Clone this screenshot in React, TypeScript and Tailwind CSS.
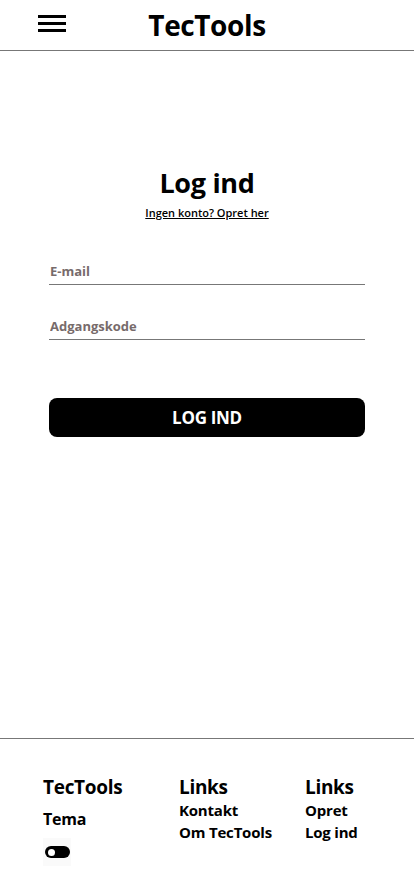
import { useState } from "react";

const font = { fontFamily: '"Open Sans", "Noto Sans", sans-serif' };

function Header() {
  return (
    <header className="relative h-[51px] border-b border-[#777] flex items-center justify-center">
      <button className="absolute left-[38px] top-[15px] flex flex-col gap-[4px]" aria-label="Menu">
        <span className="block w-[28px] h-[3px] bg-black" />
        <span className="block w-[28px] h-[3px] bg-black" />
        <span className="block w-[28px] h-[3px] bg-black" />
      </button>
      <h1 className="text-[28px] font-bold tracking-[-0.4px] text-black leading-none">TecTools</h1>
    </header>
  );
}

function LoginForm() {
  const [email, setEmail] = useState("");
  const [password, setPassword] = useState("");

  return (
    <main className="h-[687px] flex flex-col items-center pt-[118px]">
      <h2 className="text-[27px] font-bold leading-none tracking-[-0.3px]">Log ind</h2>
      <a href="#" className="mt-[11px] text-[11px] font-semibold underline text-black leading-none">
        Ingen konto? Opret her
      </a>
      <form className="w-[316px] mt-[40px] flex flex-col" onSubmit={(e) => e.preventDefault()}>
        <input
          type="email"
          value={email}
          onChange={(e) => setEmail(e.target.value)}
          placeholder="E-mail"
          className="h-[27px] px-[1px] border-b border-[#777] text-[13px] font-bold outline-none placeholder:text-[#776b6b]"
        />
        <input
          type="password"
          value={password}
          onChange={(e) => setPassword(e.target.value)}
          placeholder="Adgangskode"
          className="mt-[28px] h-[27px] px-[1px] border-b border-[#777] text-[13px] font-bold outline-none placeholder:text-[#776b6b]"
        />
        <button
          type="submit"
          className="mt-[58px] h-[39px] rounded-[8px] bg-black text-white text-[17px] font-bold tracking-[-0.3px]"
        >
          LOG IND
        </button>
      </form>
    </main>
  );
}

function Footer() {
  const [dark, setDark] = useState(false);
  return (
    <footer className="border-t border-[#777] pt-[36px] pl-[43px] pb-[30px] grid grid-cols-[136px_126px_1fr]">
      <div className="flex flex-col">
        <h3 className="text-[19px] font-bold leading-[24px] tracking-[-0.3px]">TecTools</h3>
        <p className="mt-[10px] text-[16px] font-bold leading-[20px] tracking-[-0.2px]">Tema</p>
        <button
          onClick={() => setDark(!dark)}
          className="mt-[9px] w-[28px] h-[28px] bg-[#fafafa] flex items-center justify-center"
          aria-label="Skift tema"
        >
          <span className="w-[25px] h-[12px] rounded-full bg-black flex items-center px-[3px]">
            <span className={`w-[7px] h-[7px] rounded-full bg-white ${dark ? "ml-auto" : ""}`} />
          </span>
        </button>
      </div>
      <div className="flex flex-col">
        <h3 className="text-[19px] font-bold leading-[24px] tracking-[-0.3px]">Links</h3>
        <a href="#" className="text-[15px] font-bold leading-[22px] tracking-[-0.2px]">Kontakt</a>
        <a href="#" className="text-[15px] font-bold leading-[22px] tracking-[-0.2px]">Om TecTools</a>
      </div>
      <div className="flex flex-col">
        <h3 className="text-[19px] font-bold leading-[24px] tracking-[-0.3px]">Links</h3>
        <a href="#" className="text-[15px] font-bold leading-[22px] tracking-[-0.2px]">Opret</a>
        <a href="#" className="text-[15px] font-bold leading-[22px] tracking-[-0.2px]">Log ind</a>
      </div>
    </footer>
  );
}

export default function App() {
  return (
    <div style={font} className="min-h-screen bg-white text-black">
      <Header />
      <LoginForm />
      <Footer />
    </div>
  );
}
